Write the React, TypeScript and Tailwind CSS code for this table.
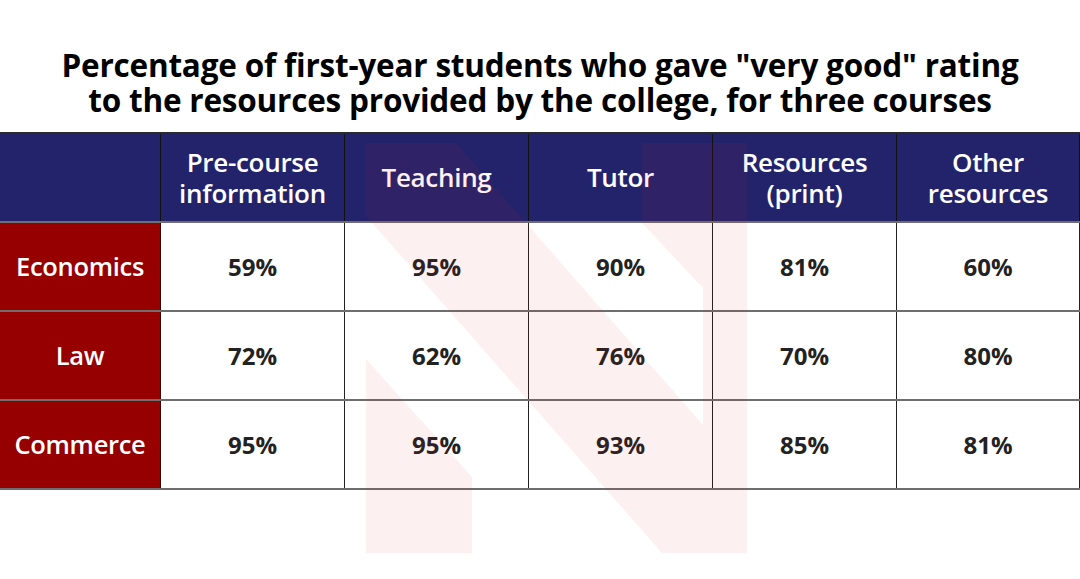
import React from "react";

const columns = ["Pre-course\ninformation", "Teaching", "Tutor", "Resources\n(print)", "Other\nresources"];

const rows = [
  { course: "Economics", values: ["59%", "95%", "90%", "81%", "60%"] },
  { course: "Law", values: ["72%", "62%", "76%", "70%", "80%"] },
  { course: "Commerce", values: ["95%", "95%", "93%", "85%", "81%"] },
];

function Watermark() {
  // faint "N" mark drawn over the table
  return (
    <svg
      className="pointer-events-none absolute left-0 top-0"
      width="1080"
      height="579"
      viewBox="0 0 1080 579"
    >
      <g fill="#e01928" fillOpacity="0.065">
        <polygon points="366,359 472,477 472,553 366,553" />
        <polygon points="366,143 456,143 703,425 703,288 642,223 642,143 747,143 747,553 662,553 366,216" />
      </g>
    </svg>
  );
}

export default function App() {
  return (
    <div
      className="relative h-[579px] w-[1080px] overflow-hidden bg-white"
      style={{ fontFamily: '"Open Sans", "Liberation Sans", sans-serif' }}
    >
      <h1 className="pt-[47px] text-center text-[31.5px] font-bold leading-[35px] tracking-[-0.2px] text-black">
        Percentage of first-year students who gave "very good" rating
        <br />
        to the resources provided by the college, for three courses
      </h1>

      <div className="mt-[15px] border-t-2 border-[#2a2a2a]">
        <div className="grid h-[87px] grid-cols-[161px_184px_184px_184px_184px_183px] bg-[#23236b] text-white">
          <div className="border-r border-[#111]" />
          {columns.map((c) => (
            <div
              key={c}
              className="flex items-center justify-center whitespace-pre-line border-r border-[#111] text-center text-[26px] font-semibold leading-[31px] tracking-[-0.3px]"
            >
              {c}
            </div>
          ))}
        </div>
        {rows.map((r) => (
          <div
            key={r.course}
            className="grid h-[89px] grid-cols-[161px_184px_184px_184px_184px_183px] border-t-2 border-[#6e6e6e]"
          >
            <div className="flex items-center justify-center border-r border-[#3a0000] bg-[#960000] text-[25.5px] font-semibold tracking-[-0.3px] text-white">
              {r.course}
            </div>
            {r.values.map((v, i) => (
              <div
                key={i}
                className="flex items-center justify-center border-r border-[#222] text-[24px] font-bold text-[#222]"
              >
                {v}
              </div>
            ))}
          </div>
        ))}
        <div className="border-t-2 border-[#6e6e6e]" />
      </div>

      <Watermark />
    </div>
  );
}
